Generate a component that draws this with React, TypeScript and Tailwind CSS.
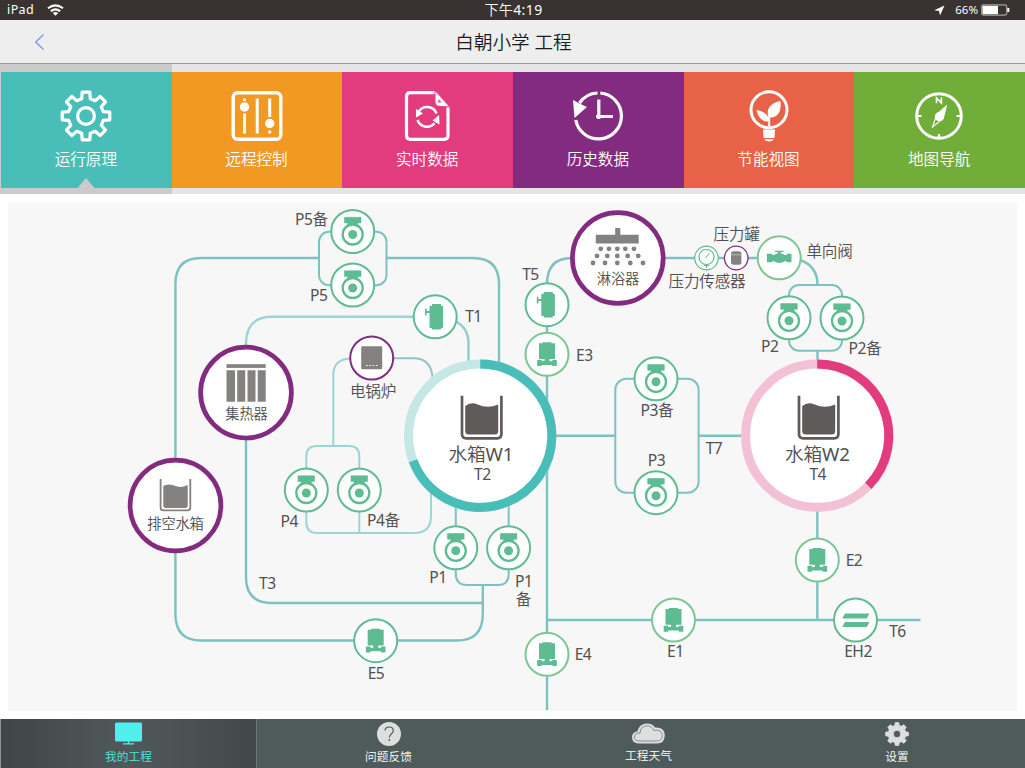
import React from "react";

const FONT = "font-['Noto_Sans','Noto_Sans_CJK_SC',sans-serif]";
const GREEN = "#5fbb92";
const PURPLE = "#832b80";
const PIPE = "#7cc2c1";
const LIGHT_PIPE = "#9bd6d4";

/* ---------- tab icons (54 x 54) ---------- */

function gearPath(cx: number, cy: number, outer: number, inner: number, top: number, base: number) {
  const points: string[] = [];
  for (let i = 0; i < 8; i++) {
    const a = (i * 45 * Math.PI) / 180;
    const put = (r: number, w: number) => {
      const x = cx + r * Math.sin(a) + w * Math.cos(a);
      const y = cy - r * Math.cos(a) + w * Math.sin(a);
      points.push(`${x.toFixed(2)} ${y.toFixed(2)}`);
    };
    put(inner, -base);
    put(outer, -top);
    put(outer, top);
    put(inner, base);
  }
  return `M${points.join("L")}Z`;
}

function GearIcon() {
  return (
    <svg width="54" height="54" viewBox="0 0 54 54" fill="none" stroke="#fff" strokeWidth="3.2" strokeLinejoin="round">
      <path d={gearPath(27, 27, 23.800, 17.300, 3.800, 4.300)} />
      <circle cx="27" cy="27" r="8.400" />
    </svg>
  );
}

function SlidersIcon() {
  return (
    <svg width="54" height="54" viewBox="0 0 54 54" fill="none" stroke="#fff" strokeWidth="3">
      <rect x="3.200" y="3.700" width="47.600" height="46.600" rx="4.500" strokeWidth="3.400" />
      <path d="M14.500 9.500v2.500M14.500 24.500v20M27.200 9.500v35M39.700 9.500v18.500M39.700 41.500v3" />
      <circle cx="14.500" cy="18" r="4.700" fill="#fff" stroke="none" />
      <circle cx="39.700" cy="34.500" r="4.700" fill="#fff" stroke="none" />
    </svg>
  );
}

function RefreshFileIcon() {
  return (
    <svg className="-ml-[2px]" width="54" height="54" viewBox="0 0 54 54" fill="none" stroke="#fff" strokeWidth="3.2">
      <path d="M34.500 3.700H10.500Q6.500 3.700 6.500 7.700V46Q6.500 50.300 10.500 50.300H44Q48 50.300 48 46V18.500" />
      <path d="M35.500 2.500L49 17.500L39 16.800Q35.500 16.500 35.500 13ZM38.300 10V13.500H41.600Z" fill="#fff" fillRule="evenodd" stroke="none" />
      <path d="M18.500 23A10 10 0 0 1 36.500 24.500M17.500 31A10 10 0 0 0 34.500 34.300" strokeWidth="2.400" />
      <path d="M16 20V28.500L23 24.500ZM39 26L32.500 31.500L39.500 35.500Z" fill="#fff" stroke="none" />
    </svg>
  );
}

function HistoryIcon() {
  return (
    <svg width="54" height="54" viewBox="0 0 54 54" fill="none" stroke="#fff" strokeWidth="3.2">
      <path d="M29.300 4A23 23 0 1 1 4.800 31" />
      <path d="M26.500 4A23 23 0 0 0 8.500 14" />
      <path d="M2 11L3.500 29L16 18L9.500 15Z" fill="#fff" stroke="none" />
      <path d="M27.800 10.500V30M25 27.500H42" />
    </svg>
  );
}

function BulbIcon() {
  return (
    <svg width="54" height="54" viewBox="0 0 54 54" fill="none" stroke="#fff" strokeWidth="3">
      <circle cx="27" cy="20.800" r="18" />
      <path d="M27.200 39V30" strokeWidth="2" />
      <path d="M27 30.500L26.500 32.500Q17 33 14.500 21Q25 22.500 27 30.500ZM26.500 29Q22.500 15.500 38.500 12Q40 28 28.500 28.500L27.500 31Z" fill="#fff" stroke="none" />
      <path d="M21 40.500H33L32.500 49H21.500ZM22 50.300H32Q30 52.500 27 52.500T22 50.300Z" fill="#fff" stroke="none" />
    </svg>
  );
}

function CompassIcon() {
  return (
    <svg className="-ml-[1.500px]" width="54" height="54" viewBox="0 0 54 54" fill="none" stroke="#fff" strokeWidth="3">
      <circle cx="27" cy="27" r="22.300" />
      <path d="M4 27H9.500M44.500 27H50M27 49.500V45" strokeWidth="2.200" />
      <path d="M24.500 14.300V9L29.400 14V8.600" strokeWidth="1.600" />
      <path d="M35.200 15.500L32.500 27L25 24.500Z" fill="#fff" stroke="none" />
      <path d="M23.500 29L20.500 38L27.500 32.500" strokeWidth="1.100" />
      <circle cx="27.500" cy="27.700" r="4.700" fill="#fff" stroke="none" />
    </svg>
  );
}

const TABS = [
  { label: "运行原理", bg: "bg-[#49beb9]", Icon: GearIcon, active: true },
  { label: "远程控制", bg: "bg-[#f19923]", Icon: SlidersIcon },
  { label: "实时数据", bg: "bg-[#e33c7e]", Icon: RefreshFileIcon },
  { label: "历史数据", bg: "bg-[#832b80]", Icon: HistoryIcon },
  { label: "节能视图", bg: "bg-[#e86248]", Icon: BulbIcon },
  { label: "地图导航", bg: "bg-[#71ad39]", Icon: CompassIcon },
];

/* ---------- diagram parts ---------- */

type NodeKind = "pump" | "meter" | "valve" | "check" | "exchanger" | "boiler";

function Glyph({ kind }: { kind: NodeKind }) {
  switch (kind) {
    case "pump":
      return (
        <g>
          <path d="M-8.300-14.200H8.300V-8.600H5V-5H-5V-8.600H-8.300Z" fill={GREEN} stroke={GREEN} strokeWidth="0.6" strokeLinejoin="round" />
          <circle cy="3" r="10" fill="#fff" stroke={GREEN} strokeWidth="2.300" />
          <circle cy="3" r="4.500" fill={GREEN} />
        </g>
      );
    case "meter":
      return (
        <g fill={GREEN}>
          <rect x="-5.700" y="-11" width="13.600" height="22.300" rx="1" />
          <rect x="-3.200" y="-12.700" width="9" height="25.500" rx="0.500" />
          <path d="M-10.200-8H-8.600V-5.800H-5V-3.800H-8.600V-1.300H-10.200Z" />
        </g>
      );
    case "valve":
      return (
        <path
          fill={GREEN}
          d="M-8-11H-4.500V-12H4.500V-11H8V4.700H2.500V7H5.300V5.800H9.800V11.800H5.300V10.600H-5.300V11.800H-9.800V5.800H-5.300V7H-2.500V4.700H-8Z"
        />
      );
    case "check":
      return (
        <path
          fill={GREEN}
          d="M-12.300-4H-7V-2.800H-5Q-3.500-4-1.300-4.500V-5.800H-4.300V-7H4.300V-5.800H1.500V-4.500Q4-4 5.500-2.800H7.500V-4H12.300V4.500H7.500V3.500H5.500Q3 5.300 0 5.300T-5 3.500H-7V4.500H-12.300Z"
        />
      );
    case "exchanger":
      return <path fill={GREEN} d="M-10.500-6.400H14L11.300-1.600H-13.300ZM-10.500 2.100H14L11.300 6.900H-13.300Z" />;
    case "boiler":
      return (
        <g>
          <rect x="-10.500" y="-11.700" width="21" height="23" rx="1.200" fill="#838281" />
          <path d="M-5.500 7.500H6" stroke="#fff" strokeWidth="1" strokeDasharray="1.500 1.700" />
        </g>
      );
  }
}

const NODES: { x: number; y: number; kind: NodeKind; ring?: string }[] = [
  { x: 352.7, y: 231.5, kind: "pump" },
  { x: 352.7, y: 285, kind: "pump" },
  { x: 435.2, y: 316.8, kind: "meter" },
  { x: 371.7, y: 358, kind: "boiler", ring: PURPLE },
  { x: 306.3, y: 490, kind: "pump" },
  { x: 359.3, y: 490, kind: "pump" },
  { x: 455.8, y: 547.8, kind: "pump" },
  { x: 508.6, y: 547.8, kind: "pump" },
  { x: 375.7, y: 640.7, kind: "valve" },
  { x: 547, y: 304.7, kind: "meter" },
  { x: 547, y: 354.3, kind: "valve", ring: "#7cc694" },
  { x: 547, y: 654.3, kind: "valve", ring: "#7cc694" },
  { x: 656, y: 378.8, kind: "pump" },
  { x: 656, y: 492.7, kind: "pump" },
  { x: 779.2, y: 257.8, kind: "check", ring: "#7cc694" },
  { x: 789, y: 317.8, kind: "pump" },
  { x: 842, y: 318, kind: "pump" },
  { x: 817.3, y: 560, kind: "valve", ring: "#7cc694" },
  { x: 673.5, y: 620, kind: "valve", ring: "#7cc694" },
  { x: 855.5, y: 620, kind: "exchanger" },
];

const LABELS: { text: string; x: number; y: number; size?: "sm" | "lg" }[] = [
  { text: "P5备", x: 311.5, y: 220 },
  { text: "P5", x: 318.7, y: 295.5 },
  { text: "T1", x: 473.5, y: 316.5 },
  { text: "电锅炉", x: 373, y: 392 },
  { text: "T5", x: 530.5, y: 275 },
  { text: "E3", x: 584.3, y: 355.5 },
  { text: "淋浴器", x: 618, y: 279, size: "sm" },
  { text: "集热器", x: 246.5, y: 414, size: "sm" },
  { text: "排空水箱", x: 175.5, y: 524, size: "sm" },
  { text: "P4", x: 289.2, y: 521.5 },
  { text: "P4备", x: 383.5, y: 521 },
  { text: "T3", x: 267.3, y: 583.5 },
  { text: "E5", x: 376, y: 673.5 },
  { text: "水箱W1", x: 481, y: 454, size: "lg" },
  { text: "T2", x: 482.3, y: 474.5 },
  { text: "P1", x: 438, y: 577.5 },
  { text: "P1", x: 523.7, y: 581.5 },
  { text: "备", x: 523.5, y: 600 },
  { text: "E4", x: 583, y: 654.5 },
  { text: "P3备", x: 657, y: 410.5 },
  { text: "P3", x: 656.5, y: 460.5 },
  { text: "T7", x: 714, y: 448.5 },
  { text: "压力罐", x: 736.5, y: 234.5 },
  { text: "压力传感器", x: 707, y: 282 },
  { text: "单向阀", x: 829.5, y: 252 },
  { text: "P2", x: 769.7, y: 346.5 },
  { text: "P2备", x: 865, y: 348.5 },
  { text: "水箱W2", x: 817.5, y: 454, size: "lg" },
  { text: "T4", x: 817.7, y: 474.5 },
  { text: "E2", x: 854, y: 560.5 },
  { text: "E1", x: 675.3, y: 651.5 },
  { text: "EH2", x: 858, y: 651.5 },
  { text: "T6", x: 897.5, y: 631.5 },
];

const LABEL_SIZE = {
  sm: "text-[14.3px]",
  md: "text-[15.600px] tracking-[-0.5px]",
  lg: "text-[18.700px]",
};

const ORIGIN = { x: 8, y: 202 };

function LabelText({ text }: { text: string }) {
  return (
    <>
      {text.split(/([\u4e00-\u9fff]+)/).filter(Boolean).map((run) =>
        /[\u4e00-\u9fff]/.test(run) ? (
          <span key={run} className="font-[350] tracking-[-0.2px]">
            {run}
          </span>
        ) : (
          run
        )
      )}
    </>
  );
}

function arc(cx: number, cy: number, r: number, degrees: number) {
  const a = (degrees * Math.PI) / 180;
  return `M${cx} ${cy - r}A${r} ${r} 0 ${degrees > 180 ? 1 : 0} 1 ${cx + r * Math.sin(a)} ${cy - r * Math.cos(a)}`;
}

function Tank({ cx, track, fill, degrees }: { cx: number; track: string; fill: string; degrees: number }) {
  const cy = 435.7;
  return (
    <g>
      <circle cx={cx} cy={cy} r="71.600" fill="#fff" stroke={track} strokeWidth="9" />
      <path d={arc(cx, cy, 71.6, degrees)} fill="none" stroke={fill} strokeWidth="9" />
      <g transform={`translate(${cx + 1.5} 417)`}>
        <path d="M-19.700-21.300V17Q-19.700 21.300-15.500 21.300H15.500Q19.700 21.300 19.700 17V-21.300" fill="none" stroke="#5f5b5a" strokeWidth="2.700" />
        <path d="M-16.500-11Q-11-15.500-4-12.500Q6-8 16.500-12.500V14Q16.500 17.500 13 17.500H-13Q-16.500 17.500-16.500 14Z" fill="#5f5b5a" />
      </g>
    </g>
  );
}

function Diagram() {
  return (
    <div className="relative h-[509px] w-[1009px] bg-[#f7f7f7]">
      <svg className="block" width="1009" height="509" viewBox="8 202 1009 509" fill="none">
        <g stroke={PIPE} strokeWidth="2.4">
          <path d="M175.400 460V284Q175.400 258 201 258H319M386.500 258H473Q499 258 499 284V366" />
          <path d="M175.400 550V614Q175.400 640.500 201 640.500H457Q482.800 640.500 482.800 614V585" />
          <path d="M246 438V577Q246 603 272 603H482.800" />
          <path d="M572 258Q547 258 547 284V710" />
          <path d="M547 620H920.500M817.300 505V620M555 435.700H615.500M698.500 435.700H742" />
          <path d="M664 258H760M800 260Q817.500 266 817.500 285M817.500 350V362" />
        </g>
        <g stroke={PIPE} strokeWidth="2">
          <rect x="319" y="231.800" width="67.500" height="53.400" rx="10" />
          <rect x="615.300" y="378.800" width="83.300" height="114" rx="11" />
          <rect x="789" y="285" width="53" height="65.700" rx="10" />
          <path d="M455.800 505V574Q455.800 585 467 585H498Q508.700 585 508.700 574V500" />
        </g>
        <g stroke={LIGHT_PIPE} strokeWidth="2.400">
          <path d="M246 350V342Q247 316.800 272 316.800H414" />
          <path d="M455 321Q468.500 328 468.500 343V364" stroke="#90cccb" />
        </g>
        <g stroke={LIGHT_PIPE} strokeWidth="2">
          <path d="M352 358.500Q333.300 358.500 333.300 375V446M306.300 470V456Q306.300 446 317 446H349Q359.300 446 359.300 456V470" />
          <path d="M392 358.300H415Q431 359 432.700 378" stroke="#92c3c8" />
          <path d="M306.300 510V522Q306.300 533 317 533H414Q431 533 431 516V490M359.300 510V533" />
        </g>

        <Tank cx={480.2} track="#c5e8e5" fill="#49beb9" degrees={249.500} />
        <Tank cx={817.2} track="#f2c1d6" fill="#e33c7e" degrees={134.500} />

        <g fill="#fff" stroke={PURPLE} strokeWidth="4.700">
          <circle cx="246" cy="392.600" r="45.400" />
          <circle cx="175.500" cy="505.500" r="45.400" />
          <circle cx="617.800" cy="258" r="45.400" />
        </g>

        <g fill="#838281">
          <rect x="226.500" y="364.200" width="39.200" height="3.700" />
          <path d="M226.500 370.200H235V401.800H226.500ZM237.200 370.200H245.200V401.800H237.200ZM247.500 370.200H255.500V401.800H247.500ZM257.700 370.200H265.700V401.800H257.700Z" />
          <path d="M595.800 234.700H615.200V228H620.300V234.700H638.700V243.600H595.800Z" />
          {[
            [600.8, 609, 617.3, 625.3, 634],
            [597, 607.300, 617.300, 627.700, 638.200],
            [593, 605, 617.300, 630.300, 643],
          ].map((row, i) =>
            row.map((x) => <circle key={`${i}-${x}`} cx={x} cy={248.800 + i * 7.100} r="2.400" />)
          )}
          <path d="M163.300 486Q168 483.200 174 485.500Q181 488.500 187.700 485V505.500Q187.700 508 185 508H166Q163.300 508 163.300 505.500Z" />
        </g>
        <path d="M160.600 479V507.500Q160.600 510.300 163.500 510.300H187.500Q190.300 510.300 190.300 507.500V479" stroke="#838281" strokeWidth="1.800" />

        <g transform="translate(706.500 258)" stroke={GREEN}>
          <circle r="11.800" fill="#fff" strokeWidth="1.200" />
          <circle cy="-1" r="7.500" strokeWidth="1.200" />
          <path d="M-1 0L3-5M0 6.500V10M-2.500 7.500H2.500" strokeWidth="1" />
        </g>
        <g transform="translate(736.200 258)">
          <circle r="11.800" fill="#fff" stroke={PURPLE} strokeWidth="1.300" />
          <rect x="-5.200" y="-6.700" width="10.400" height="13.500" rx="2.500" fill="#838281" />
          <path d="M-5.200-3.200H5.200" stroke="#d5d5d5" strokeWidth="0.700" />
        </g>

        {NODES.map((n) => (
          <g key={`${n.x}-${n.y}`} transform={`translate(${n.x} ${n.y})`}>
            <circle r="21.500" fill="#fff" stroke={n.ring ?? GREEN} strokeWidth="2" />
            <Glyph kind={n.kind} />
          </g>
        ))}
      </svg>
      {LABELS.map((l) => (
        <span
          key={`${l.text}-${l.x}`}
          className={`absolute -translate-x-1/2 -translate-y-1/2 leading-none whitespace-nowrap text-[#505050] ${LABEL_SIZE[l.size ?? "md"]}`}
          style={{ left: l.x - ORIGIN.x, top: l.y - ORIGIN.y }}
        >
          <LabelText text={l.text} />
        </span>
      ))}
    </div>
  );
}

/* ---------- bottom bar ---------- */

function MonitorIcon() {
  return (
    <svg width="27" height="24" viewBox="0 0 27 24" fill="#50efed">
      <rect x="0" y="0.500" width="27" height="19" rx="1.500" />
      <path d="M12.800 19H14.200V21.300H19V22.500H8V21.300H12.800Z" />
    </svg>
  );
}

function HelpIcon() {
  return (
    <svg width="24" height="24" viewBox="0 0 24 24" fill="none">
      <circle cx="12" cy="12" r="12" fill="#dcdfde" />
      <path d="M8 8.500Q8.300 5 12.200 5T16.300 8.700C16.300 11.500 12.300 12 12.300 15.500" stroke="#4f5b5a" strokeWidth="1.200" />
      <circle cx="12.300" cy="18" r="0.900" fill="#4f5b5a" />
    </svg>
  );
}

function CloudIcon() {
  return (
    <svg width="33" height="21" viewBox="0 0 33 21">
      <path d="M6.500 20.500Q0 20 0 14Q0 9.500 5.500 8.200Q7.500 .5 15 .5Q20.500 .5 23 4.500Q32.800 4 32.800 12.500Q32.500 20.500 25 20.500Z" fill="#dcdfde" />
      <path d="M7 18Q2.500 18 2.500 14Q2.500 10 8 10Q8.500 3 15 2.800Q20 3 21.500 7.300Q30 6 30.300 12.500Q30 18 25 18Z" fill="none" stroke="#7d8584" strokeWidth="0.900" />
    </svg>
  );
}

function SettingsIcon() {
  return (
    <svg width="24" height="24" viewBox="0 0 24 24">
      <path d={gearPath(12, 12, 11.4, 8.6, 1.7, 2.3) + "M15.700 12A3.700 3.700 0 1 0 8.300 12A3.700 3.700 0 1 0 15.700 12Z"} fill="#dcdfde" fillRule="evenodd" stroke="#dcdfde" strokeWidth="0.800" strokeLinejoin="round" />
    </svg>
  );
}

function BottomBar() {
  const item = "flex flex-col items-center text-[11.7px] leading-none font-[350]";
  return (
    <footer className="flex h-[49px] bg-[#4f5b5a] text-white">
      <div className={`${item} w-[257px] border-x border-r-[#6b7675] border-l-[#8f9695] bg-linear-to-r from-[#3f4647] via-[#50595a] to-[#424848] pt-[3px] text-[#50e4e1]`}>
        <MonitorIcon />
        <span className="mt-[5px]">我的工程</span>
      </div>
      <div className={`${item} w-[263px] pt-[3px]`}>
        <HelpIcon />
        <span className="mt-[5px]">问题反馈</span>
      </div>
      <div className={`${item} w-[257px] pt-1`}>
        <CloudIcon />
        <span className="mt-1.5">工程天气</span>
      </div>
      <div className={`${item} w-[240px] pt-[3px]`}>
        <SettingsIcon />
        <span className="mt-[5px]">设置</span>
      </div>
    </footer>
  );
}

/* ---------- page ---------- */

export default function App() {
  return (
    <div className={`flex h-[768px] w-[1025px] flex-col overflow-hidden bg-white ${FONT}`}>
      <div className="grid h-5 grid-cols-3 items-center bg-[#383330] text-white">
        <div className="flex items-center gap-[13px] pl-[7px] text-[12.500px] leading-5 tracking-[0.400px]">
          <span>iPad</span>
          <svg width="17" height="12" viewBox="0 0 17 12" fill="none" stroke="#fff" strokeWidth="2">
            <path d="M1 4.300Q8.500-1.500 16 4.300M3.800 7.200Q8.500 3.500 13.200 7.200" />
            <path d="M5.700 9Q8.500 7 11.300 9L8.500 11.700Z" fill="#fff" stroke="none" />
          </svg>
        </div>
        <div className="pl-0.5 text-center text-[14px] leading-5 tracking-[0.400px]">
          <span className="font-[350]">下午</span>4:19
        </div>
        <div className="flex items-center justify-end pr-[15px] text-[11.500px] leading-5">
          <svg className="mr-2.5" width="11" height="11" viewBox="0 0 11 11">
            <path d="M10.500 .5L6 10.500L5 6L.3 5.300Z" fill="#fff" />
          </svg>
          <span>66%</span>
          <svg className="ml-[3px]" width="29" height="12" viewBox="0 0 29 12">
            <rect x="0.700" y="0.900" width="25" height="10.200" rx="1.500" fill="none" stroke="#a5a2a0" strokeWidth="1.200" />
            <rect x="1.500" y="1.800" width="15.500" height="8.400" fill="#fff" />
            <path d="M26.300 4H28.300V8H26.300Z" fill="#fff" />
          </svg>
        </div>
      </div>

      <header className="grid h-11 grid-cols-3 items-center border-b border-[#999] bg-[#eee]">
        <svg className="ml-[34px]" width="12" height="18" viewBox="0 0 12 18" fill="none" stroke="#6a9cf5" strokeWidth="1.300">
          <path d="M9.500 1.500L1.700 9L9.500 16.500" />
        </svg>
        <h1 className="pt-px pl-[2px] text-center text-[18.600px] leading-none font-[350] whitespace-nowrap text-[#1c1c1c]">白朝小学 工程</h1>
      </header>

      <nav className="grid h-[130px] grid-cols-6 bg-[#cbcbcb] pl-px">
        {TABS.map(({ label, bg, Icon, active }) => (
          <div key={label} className={`flex flex-col pt-[7.500px] pb-1.5 ${active ? "bg-[#cbcbcb]" : "bg-[#e5e5e5]"}`}>
            <div className={`relative flex flex-1 flex-col items-center pt-[17.500px] text-white ${bg}`}>
              <Icon />
              <span className="mt-[5px] -ml-px text-[15.600px] leading-[23px] font-[350]">{label}</span>
              {active && (
                <svg className="absolute bottom-0" width="17" height="10" viewBox="0 0 17 10">
                  <path d="M8 0L16.500 10H-.5Z" fill="#cbcbcb" />
                </svg>
              )}
            </div>
          </div>
        ))}
      </nav>

      <main className="flex flex-1 justify-center pt-2">
        <Diagram />
      </main>

      <BottomBar />
    </div>
  );
}
